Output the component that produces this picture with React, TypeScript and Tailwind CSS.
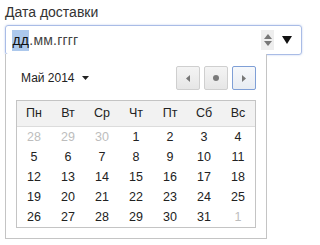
import React from "react";

const weeks: [number, boolean][][] = [
  [[28, true], [29, true], [30, true], [1, false], [2, false], [3, false], [4, false]],
  [[5, false], [6, false], [7, false], [8, false], [9, false], [10, false], [11, false]],
  [[12, false], [13, false], [14, false], [15, false], [16, false], [17, false], [18, false]],
  [[19, false], [20, false], [21, false], [22, false], [23, false], [24, false], [25, false]],
  [[26, false], [27, false], [28, false], [29, false], [30, false], [31, false], [1, true]],
];

const days = ["Пн", "Вт", "Ср", "Чт", "Пт", "Сб", "Вс"];

export default function App() {
  return (
    <div className="h-[245px] w-[311px] bg-white pl-[5px] pt-[4px] font-['Liberation_Sans',Arial,sans-serif] text-[#222]">
      <div className="text-[14px] leading-[17px] text-[#333]">Дата доставки</div>

      <div className="mt-[4px] flex h-[30px] w-[297px] items-center rounded-[3px] border border-[#a9bce6] pl-[6px] pr-[9px] shadow-[0_0_2px_rgba(120,150,220,0.5)]">
        <span className="bg-[#acc8ec] px-[0.5px] text-[14px] leading-[21px] text-[#111]">дд</span>
        <span className="text-[14px] leading-[21px] tracking-[0.2px] text-[#444]">.мм.гггг</span>
        <div className="ml-auto flex items-center gap-[8px]">
          <div className="flex h-[20px] w-[13px] flex-col items-center justify-center gap-[2px] bg-[#eeeeee]">
            <svg width="8" height="5" viewBox="0 0 8 5">
              <path d="M4 0L8 5H0Z" fill="#777" />
            </svg>
            <svg width="8" height="5" viewBox="0 0 8 5">
              <path d="M0 0H8L4 5Z" fill="#777" />
            </svg>
          </div>
          <svg width="10" height="8" viewBox="0 0 10 8">
            <path d="M0 0H10L5 8Z" fill="#111" />
          </svg>
        </div>
      </div>

      <div className="mt-[-1px] w-[262px] border border-t-0 border-[#c4c4c4] bg-white px-[10px] pt-[12px] pb-[10px]">
        <div className="flex items-center justify-between pl-[5px]">
          <div className="flex items-center gap-[7px] text-[12px] leading-[16px] text-[#222]">
            <span>Май 2014</span>
            <svg width="7" height="4" viewBox="0 0 7 4">
              <path d="M0 0H7L3.5 4Z" fill="#222" />
            </svg>
          </div>
          <div className="flex gap-[4px]">
            <button className="flex h-[24px] w-[24px] items-center justify-center rounded-[2px] border border-[#cfcfcf] bg-gradient-to-b from-[#f4f4f4] to-[#e6e6e6]">
              <svg width="4" height="7" viewBox="0 0 4 7">
                <path d="M4 0V7L0 3.5Z" fill="#777" />
              </svg>
            </button>
            <button className="flex h-[24px] w-[24px] items-center justify-center rounded-[2px] border border-[#cfcfcf] bg-gradient-to-b from-[#f4f4f4] to-[#e6e6e6]">
              <span className="h-[6px] w-[6px] rounded-full bg-[#7a7a7a]" />
            </button>
            <button className="flex h-[24px] w-[24px] items-center justify-center rounded-[2px] border border-[#7f9fd6] bg-gradient-to-b from-[#f6f8fb] to-[#e8ecf2]">
              <svg width="4" height="7" viewBox="0 0 4 7">
                <path d="M0 0V7L4 3.5Z" fill="#777" />
              </svg>
            </button>
          </div>
        </div>

        <div className="mt-[10px] border border-[#c4c4c4]">
          <div className="grid h-[26px] grid-cols-7 items-center border-b border-[#dcdcdc] bg-[#f2f2f2] text-center text-[12.5px] text-[#222]">
            {days.map((d) => (
              <div key={d}>{d}</div>
            ))}
          </div>
          {weeks.map((w, i) => (
            <div key={i} className="grid h-[20px] grid-cols-7 items-center text-center text-[12.5px] leading-[20px]">
              {w.map(([n, muted], j) => (
                <div key={j} className={muted ? "text-[#bdbdbd]" : "text-[#222]"}>
                  {n}
                </div>
              ))}
            </div>
          ))}
        </div>
      </div>
    </div>
  );
}
